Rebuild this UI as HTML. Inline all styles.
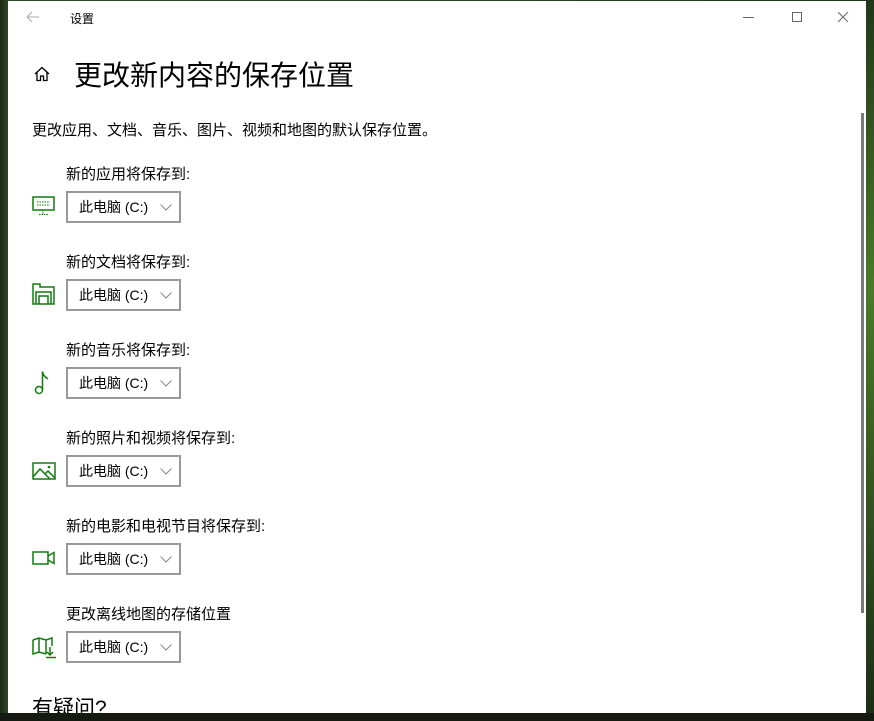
<!DOCTYPE html>
<html><head><meta charset="utf-8"><style>
body{margin:0;width:874px;height:721px;overflow:hidden;background:linear-gradient(90deg,#1b2a16 0,#2c4a22 8px,#1e3a18 100%);font-family:"Liberation Sans","Noto Sans CJK SC",sans-serif;position:relative}
.bgr{position:absolute;left:866px;top:0;width:8px;height:721px;background:linear-gradient(#203818,#4a7a2a 40%,#1b2d15)}
.bgb{position:absolute;left:0;top:713px;width:874px;height:8px;background:#151a12}
.win{position:absolute;left:8px;top:1px;width:858px;height:712px;background:#fff;overflow:hidden}
.t{position:absolute;white-space:nowrap;color:#000}
.dd{position:absolute;left:58px;width:111px;height:28px;border:2px solid #999;font-size:14px;line-height:28px}
.dd span{position:absolute;left:11px}
.dd svg{position:absolute;left:92px;top:11px}
.ic{position:absolute;left:24px}
.lb{font-size:15px}
</style></head><body>
<div class="bgr"></div><div class="bgb"></div>
<div class="win">
<svg style="position:absolute;left:18px;top:10px" width="14" height="12"><path d="M1 6H13M1 6L6 1M1 6L6 11" stroke="#aaa" fill="none"/></svg>
<div class="t" style="left:62px;top:9px;font-size:12px">设置</div>
<svg style="position:absolute;left:735px;top:16px" width="12" height="2"><path d="M0 .5H11" stroke="#666"/></svg>
<svg style="position:absolute;left:784px;top:11px" width="11" height="11"><rect x=".5" y=".5" width="9" height="9" stroke="#666" fill="none"/></svg>
<svg style="position:absolute;left:830px;top:11px" width="11" height="11"><path d="M0 0L10 10M10 0L0 10" stroke="#666"/></svg>
<svg style="position:absolute;left:26px;top:65px" width="16" height="16"><path d="M1 8L8 1.5L15 8M3 6.5V14.5H6.5V10H9.5V14.5H13V6.5" stroke="#000" stroke-width="1.3" fill="none"/></svg>
<div class="t" style="left:66px;top:53px;font-size:28px">更改新内容的保存位置</div>
<div class="t lb" style="left:24px;top:118px">更改应用、文档、音乐、图片、视频和地图的默认保存位置。</div>

<div class="t lb" style="left:58px;top:162px">新的应用将保存到:</div>
<svg class="ic" style="top:195px" width="24" height="20"><rect x="1" y="1" width="21" height="13" stroke="#107c10" stroke-width="1.5" fill="none"/><path d="M5 6H18M5 9H18M11 14V18M7 18.5H16" stroke="#107c10" stroke-dasharray="1.5 1" fill="none"/></svg>
<div class="dd" style="top:190px"><span>此电脑 (C:)</span><svg width="12" height="7"><path d="M.5 .5L6 6L11.5 .5" stroke="#888" fill="none"/></svg></div>

<div class="t lb" style="left:58px;top:250px">新的文档将保存到:</div>
<svg class="ic" style="top:282px" width="24" height="22"><path d="M1 1H8V4H22V21H1Z M4 21V9H19V21 M7 21V13H16V21" stroke="#107c10" stroke-width="1.5" fill="none"/></svg>
<div class="dd" style="top:278px"><span>此电脑 (C:)</span><svg width="12" height="7"><path d="M.5 .5L6 6L11.5 .5" stroke="#888" fill="none"/></svg></div>

<div class="t lb" style="left:58px;top:338px">新的音乐将保存到:</div>
<svg class="ic" style="top:369px;left:26px" width="16" height="26"><circle cx="5" cy="20" r="3.5" stroke="#107c10" stroke-width="1.5" fill="none"/><path d="M8.5 20V1.5Q9 6 14 9" stroke="#107c10" stroke-width="1.5" fill="none"/></svg>
<div class="dd" style="top:366px"><span>此电脑 (C:)</span><svg width="12" height="7"><path d="M.5 .5L6 6L11.5 .5" stroke="#888" fill="none"/></svg></div>

<div class="t lb" style="left:58px;top:426px">新的照片和视频将保存到:</div>
<svg class="ic" style="top:461px" width="24" height="18"><rect x="1" y="1" width="22" height="16" stroke="#107c10" stroke-width="1.5" fill="none"/><path d="M1 15L8 7L18 17M13 12L16 9L23 16" stroke="#107c10" stroke-width="1.5" fill="none"/><circle cx="17" cy="5" r="1.3" fill="#107c10"/></svg>
<div class="dd" style="top:454px"><span>此电脑 (C:)</span><svg width="12" height="7"><path d="M.5 .5L6 6L11.5 .5" stroke="#888" fill="none"/></svg></div>

<div class="t lb" style="left:58px;top:514px">新的电影和电视节目将保存到:</div>
<svg class="ic" style="top:550px" width="24" height="14"><rect x="1" y="1" width="15" height="12" stroke="#107c10" stroke-width="1.5" fill="none"/><path d="M16 5L22 1.5V12.5L16 9" stroke="#107c10" stroke-width="1.5" fill="none"/></svg>
<div class="dd" style="top:542px"><span>此电脑 (C:)</span><svg width="12" height="7"><path d="M.5 .5L6 6L11.5 .5" stroke="#888" fill="none"/></svg></div>

<div class="t lb" style="left:58px;top:602px">更改离线地图的存储位置</div>
<svg class="ic" style="top:636px" width="26" height="22"><path d="M1 3L7 1L14 3L20 1V9 M1 3V17L7 15L14 17 M7 1V15M14 3V17M18 10V18M15 15L18 18L21 15M14 20.5H24" stroke="#107c10" stroke-width="1.5" fill="none"/></svg>
<div class="dd" style="top:630px"><span>此电脑 (C:)</span><svg width="12" height="7"><path d="M.5 .5L6 6L11.5 .5" stroke="#888" fill="none"/></svg></div>

<div class="t" style="left:24px;top:691px;font-size:21px">有疑问?</div>
<div style="position:absolute;left:853px;top:112px;width:3px;height:500px;background:#7a7a7a"></div>
</div>
</body></html>
